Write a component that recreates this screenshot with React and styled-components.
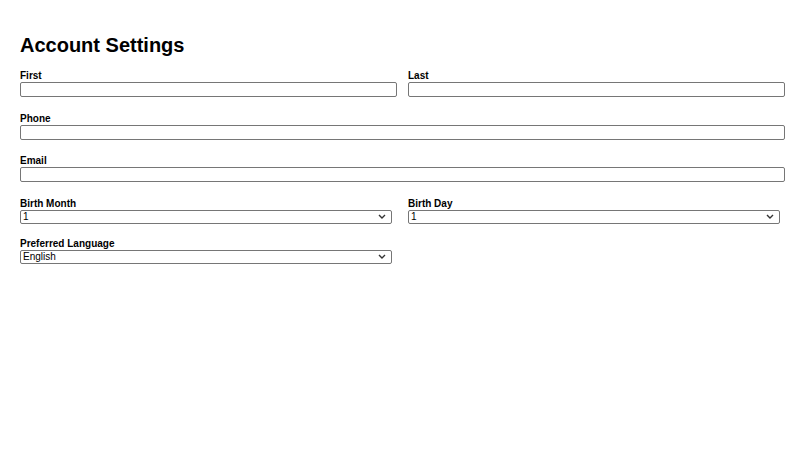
import React from "react";
import styled, { createGlobalStyle } from "styled-components";

const GlobalStyle = createGlobalStyle`
  html, body {
    margin: 0;
    padding: 0;
    background: #fff;
  }
  body {
    font-family: "Liberation Sans", Arial, sans-serif;
    color: #000;
  }
`;

const Page = styled.div`
  padding: 33px 15px 20px 20px;
  box-sizing: border-box;
  width: 800px;
`;

const Title = styled.h1`
  margin: 0 0 12px 0;
  font-size: 20px;
  line-height: 24px;
  font-weight: 700;
`;

const Grid = styled.div`
  display: grid;
  grid-template-columns: 1fr 1fr;
  column-gap: 11px;
`;

const Field = styled.div`
  display: flex;
  flex-direction: column;
  grid-column: ${(p) => (p.$wide ? "1 / span 2" : "auto")};
  margin-bottom: ${(p) => (p.$select ? "13px" : "14.5px")};
`;

const Label = styled.label`
  font-size: 10px;
  line-height: 13px;
  font-weight: 700;
`;

const Input = styled.input`
  box-sizing: border-box;
  width: 100%;
  height: 15px;
  margin: 0;
  padding: 0 2px;
  border: 1px solid #767676;
  border-radius: 2px;
  font-family: "Liberation Sans", Arial, sans-serif;
  font-size: 10px;
`;

const chevron =
  "data:image/svg+xml;utf8," +
  encodeURIComponent(
    '<svg xmlns="http://www.w3.org/2000/svg" width="8" height="5" viewBox="0 0 8 5"><path d="M1 1l3 3 3-3" fill="none" stroke="#333" stroke-width="1.4"/></svg>'
  );

const Select = styled.select`
  box-sizing: border-box;
  appearance: none;
  -webkit-appearance: none;
  width: calc(100% - 5px);
  height: 14px;
  margin: 0;
  padding: 0 14px 0 2px;
  border: 1px solid #767676;
  border-radius: 2px;
  background: #fff url("${chevron}") no-repeat right 5px center;
  color: #000;
  font-family: "Liberation Sans", Arial, sans-serif;
  font-size: 10px;
  line-height: 12px;
`;

export default function App() {
  const days = Array.from({ length: 31 }, (_, i) => i + 1);
  const months = Array.from({ length: 12 }, (_, i) => i + 1);

  return (
    <>
      <GlobalStyle />
      <Page>
        <Title>Account Settings</Title>
        <Grid>
          <Field>
            <Label>First</Label>
            <Input type="text" />
          </Field>
          <Field>
            <Label>Last</Label>
            <Input type="text" />
          </Field>
          <Field $wide>
            <Label>Phone</Label>
            <Input type="text" />
          </Field>
          <Field $wide>
            <Label>Email</Label>
            <Input type="text" />
          </Field>
          <Field $select>
            <Label>Birth Month</Label>
            <Select defaultValue="1">
              {months.map((m) => (
                <option key={m}>{m}</option>
              ))}
            </Select>
          </Field>
          <Field $select>
            <Label>Birth Day</Label>
            <Select defaultValue="1">
              {days.map((d) => (
                <option key={d}>{d}</option>
              ))}
            </Select>
          </Field>
          <Field $select>
            <Label>Preferred Language</Label>
            <Select defaultValue="English">
              <option>English</option>
              <option>Español</option>
              <option>Français</option>
            </Select>
          </Field>
        </Grid>
      </Page>
    </>
  );
}
